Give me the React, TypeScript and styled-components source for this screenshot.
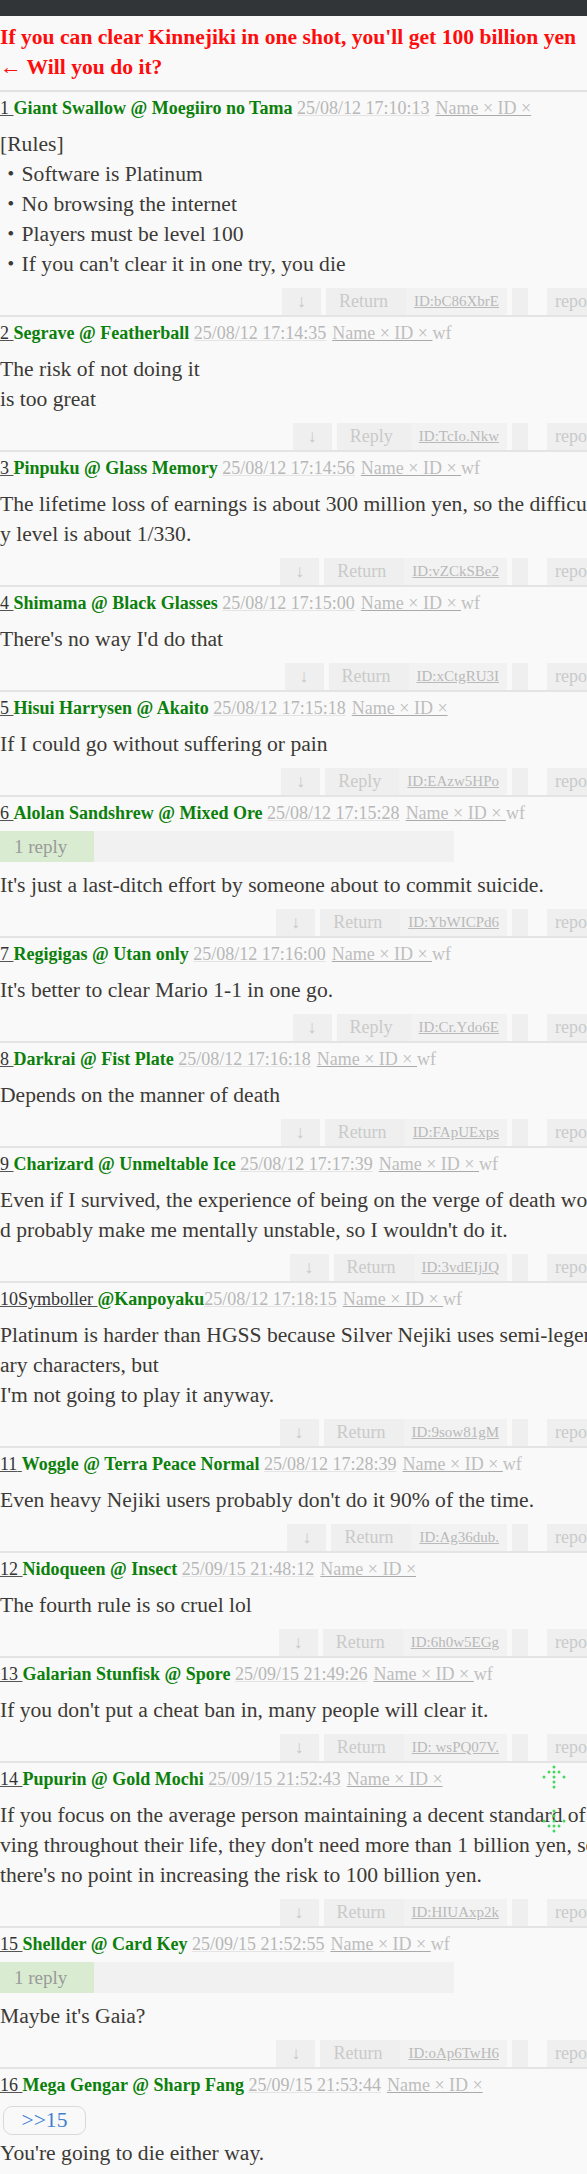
import React from 'react';
import styled, { createGlobalStyle } from 'styled-components';

const GlobalStyle = createGlobalStyle`
  body {
    margin: 0;
    background: #f9f9f9;
  }
`;

const Page = styled.div`
  width: 100%;
  overflow: hidden;
  font-family: 'Liberation Serif', 'Noto Sans CJK JP', serif;
`;

const Content = styled.div`
  width: 606px;
`;

const TopBar = styled.div`
  height: 16px;
  background: #323538;
`;

const Title = styled.h1`
  margin: 0;
  padding: 6px 0 8px;
  font-size: 21.6px;
  line-height: 30px;
  font-weight: bold;
  color: #ff0d0d;
  border-bottom: 2px solid #e2e2e2;
`;

const PostBox = styled.div<{ $last?: boolean }>`
  position: relative;
  padding-top: 3px;
  border-bottom: ${(p) => (p.$last ? 'none' : '2px solid #e4e4e4')};
`;

const Header = styled.div`
  font-size: 18px;
  line-height: 26px;
  white-space: nowrap;
`;

const Num = styled.span`
  color: #333;
  text-decoration: underline;
  text-decoration-color: #555;
`;

const Name = styled.span`
  color: #0b800b;
  font-weight: bold;
`;

const DateText = styled.span`
  color: #b7b7b7;
  text-decoration: underline;
  text-decoration-color: #e4e4e4;
  margin-right: 6px;
`;

const Meta = styled.span`
  color: #bdbdbd;
  text-decoration: underline;
  text-decoration-color: #aaa;
`;

const Wf = styled.span`
  color: #c0c0c0;
`;

const ReplyBar = styled.div`
  display: flex;
  width: 454px;
  height: 31px;
  margin: 5px 0 3px;
  background: #f1f1f1;
`;

const ReplyCount = styled.div`
  width: 80px;
  padding-left: 14px;
  background: #d9ecd1;
  color: #9a9a9a;
  font-size: 19px;
  line-height: 31px;
`;

const Body = styled.div`
  margin: 8px 0 9px;
  font-size: 21.6px;
  line-height: 30px;
  color: #3c3a36;
  word-break: break-all;
`;

const Anchor = styled.div`
  width: 81px;
  height: 27px;
  margin: 0 0 3px 3px;
  border: 1px solid #d9d9d9;
  border-radius: 9px;
  color: #3f7fd0;
  font-size: 21.6px;
  line-height: 27px;
  text-align: center;
`;

const Actions = styled.div`
  display: flex;
  justify-content: flex-end;
  align-items: flex-end;
  height: 27px;
`;

const ActBox = styled.div<{ $pad?: string; $w?: number; $ml?: number; $id?: boolean }>`
  height: 27px;
  box-sizing: border-box;
  ${(p) => (p.$w ? `width: ${p.$w}px;` : '')}
  padding: ${(p) => p.$pad || '0'};
  margin-left: ${(p) => p.$ml || 0}px;
  background: ${(p) => (p.$id ? '#f2f2f2' : '#efefef')};
  color: ${(p) => (p.$id ? '#b9b9b9' : '#cacaca')};
  font-size: ${(p) => (p.$id ? '15px' : '18px')};
  line-height: 27px;
  text-align: center;
  white-space: nowrap;
  text-decoration: ${(p) => (p.$id ? 'underline' : 'none')};
`;

const ScrollMarks = styled.svg`
  position: absolute;
  left: 541px;
  top: 2px;
`;

type Post = {
  num: string;
  name: string;
  date: string;
  wf?: boolean;
  tight?: boolean;
  replies?: number;
  anchor?: string;
  lines: string[];
  action?: string;
  id?: string;
  marks?: boolean;
};

const posts: Post[] = [
  {
    num: '1',
    name: 'Giant Swallow @ Moegiiro no Tama',
    date: '25/08/12 17:10:13',
    lines: [
      '[Rules]',
      '・Software is Platinum',
      '・No browsing the internet',
      '・Players must be level 100',
      "・If you can't clear it in one try, you die",
    ],
    action: 'Return',
    id: 'ID:bC86XbrE',
  },
  {
    num: '2',
    name: 'Segrave @ Featherball',
    date: '25/08/12 17:14:35',
    wf: true,
    lines: ['The risk of not doing it', 'is too great'],
    action: 'Reply',
    id: 'ID:TcIo.Nkw',
  },
  {
    num: '3',
    name: 'Pinpuku @ Glass Memory',
    date: '25/08/12 17:14:56',
    wf: true,
    lines: ['The lifetime loss of earnings is about 300 million yen, so the difficulty level is about 1/330.'],
    action: 'Return',
    id: 'ID:vZCkSBe2',
  },
  {
    num: '4',
    name: 'Shimama @ Black Glasses',
    date: '25/08/12 17:15:00',
    wf: true,
    lines: ["There's no way I'd do that"],
    action: 'Return',
    id: 'ID:xCtgRU3I',
  },
  {
    num: '5',
    name: 'Hisui Harrysen @ Akaito',
    date: '25/08/12 17:15:18',
    lines: ['If I could go without suffering or pain'],
    action: 'Reply',
    id: 'ID:EAzw5HPo',
  },
  {
    num: '6',
    name: 'Alolan Sandshrew @ Mixed Ore',
    date: '25/08/12 17:15:28',
    wf: true,
    replies: 1,
    lines: ["It's just a last-ditch effort by someone about to commit suicide."],
    action: 'Return',
    id: 'ID:YbWICPd6',
  },
  {
    num: '7',
    name: 'Regigigas @ Utan only',
    date: '25/08/12 17:16:00',
    wf: true,
    lines: ["It's better to clear Mario 1-1 in one go."],
    action: 'Reply',
    id: 'ID:Cr.Ydo6E',
  },
  {
    num: '8',
    name: 'Darkrai @ Fist Plate',
    date: '25/08/12 17:16:18',
    wf: true,
    lines: ['Depends on the manner of death'],
    action: 'Return',
    id: 'ID:FApUExps',
  },
  {
    num: '9',
    name: 'Charizard @ Unmeltable Ice',
    date: '25/08/12 17:17:39',
    wf: true,
    lines: [
      "Even if I survived, the experience of being on the verge of death would probably make me mentally unstable, so I wouldn't do it.",
    ],
    action: 'Return',
    id: 'ID:3vdEIjJQ',
  },
  {
    num: '10Symboller',
    name: '@Kanpoyaku',
    date: '25/08/12 17:18:15',
    wf: true,
    tight: true,
    lines: [
      'Platinum is harder than HGSS because Silver Nejiki uses semi-legendary characters, but',
      "I'm not going to play it anyway.",
    ],
    action: 'Return',
    id: 'ID:9sow81gM',
  },
  {
    num: '11',
    name: 'Woggle @ Terra Peace Normal',
    date: '25/08/12 17:28:39',
    wf: true,
    lines: ["Even heavy Nejiki users probably don't do it 90% of the time."],
    action: 'Return',
    id: 'ID:Ag36dub.',
  },
  {
    num: '12',
    name: 'Nidoqueen @ Insect',
    date: '25/09/15 21:48:12',
    lines: ['The fourth rule is so cruel lol'],
    action: 'Return',
    id: 'ID:6h0w5EGg',
  },
  {
    num: '13',
    name: 'Galarian Stunfisk @ Spore',
    date: '25/09/15 21:49:26',
    wf: true,
    lines: ["If you don't put a cheat ban in, many people will clear it."],
    action: 'Return',
    id: 'ID: wsPQ07V.',
  },
  {
    num: '14',
    name: 'Pupurin @ Gold Mochi',
    date: '25/09/15 21:52:43',
    marks: true,
    lines: [
      "If you focus on the average person maintaining a decent standard of living throughout their life, they don't need more than 1 billion yen, so there's no point in increasing the risk to 100 billion yen.",
    ],
    action: 'Return',
    id: 'ID:HIUAxp2k',
  },
  {
    num: '15',
    name: 'Shellder @ Card Key',
    date: '25/09/15 21:52:55',
    wf: true,
    replies: 1,
    lines: ["Maybe it's Gaia?"],
    action: 'Return',
    id: 'ID:oAp6TwH6',
  },
  {
    num: '16',
    name: 'Mega Gengar @ Sharp Fang',
    date: '25/09/15 21:53:44',
    anchor: '>>15',
    lines: ["You're going to die either way."],
  },
];

// dotted up / down arrows shown next to post 14
const upDots = [
  [12, 1], [7, 6], [12, 6], [17, 6], [2, 11], [12, 11], [22, 11], [12, 16], [12, 21],
];
const downDots = [
  [12, 45], [12, 50], [2, 55], [12, 55], [22, 55], [7, 60], [12, 60], [17, 60], [12, 65],
];

const Marks = () => (
  <ScrollMarks width="26" height="68" viewBox="0 0 26 68">
    {[...upDots, ...downDots].map(([x, y], i) => (
      <circle key={i} cx={x + 1} cy={y + 1} r="1.5" fill="#45d85f" />
    ))}
  </ScrollMarks>
);

const PostItem: React.FC<{ post: Post; last: boolean }> = ({ post, last }) => (
  <PostBox $last={last}>
    {post.marks && <Marks />}
    <Header>
      <Num>{post.num} </Num>
      <Name>{post.name}</Name>
      {post.tight ? '' : ' '}
      <DateText>{post.date}</DateText>
      <Meta>Name × ID × </Meta>
      {post.wf && <Wf>wf</Wf>}
    </Header>
    {post.replies && (
      <ReplyBar>
        <ReplyCount>{post.replies} reply</ReplyCount>
      </ReplyBar>
    )}
    <Body>
      {post.anchor && <Anchor>{post.anchor}</Anchor>}
      {post.lines.map((l, i) => (
        <React.Fragment key={i}>
          {i > 0 && <br />}
          {l}
        </React.Fragment>
      ))}
    </Body>
    {post.action && (
      <Actions>
        <ActBox $w={39}>↓</ActBox>
        <ActBox $pad="0 18px 0 13px" $ml={5}>
          {post.action}
        </ActBox>
        <ActBox $pad="0 8px" $id>
          {post.id}
        </ActBox>
        <ActBox $w={16} $ml={5} />
        <ActBox $pad="0 8px" $ml={19}>
          report
        </ActBox>
      </Actions>
    )}
  </PostBox>
);

const App: React.FC = () => {
  return (
    <Page>
      <GlobalStyle />
      <TopBar />
      <Content>
        <Title>
          If you can clear Kinnejiki in one shot, you'll get 100 billion yen
          <br />← Will you do it?
        </Title>
        {posts.map((p, i) => (
          <PostItem key={p.num} post={p} last={i === posts.length - 1} />
        ))}
      </Content>
    </Page>
  );
};

export default App;
